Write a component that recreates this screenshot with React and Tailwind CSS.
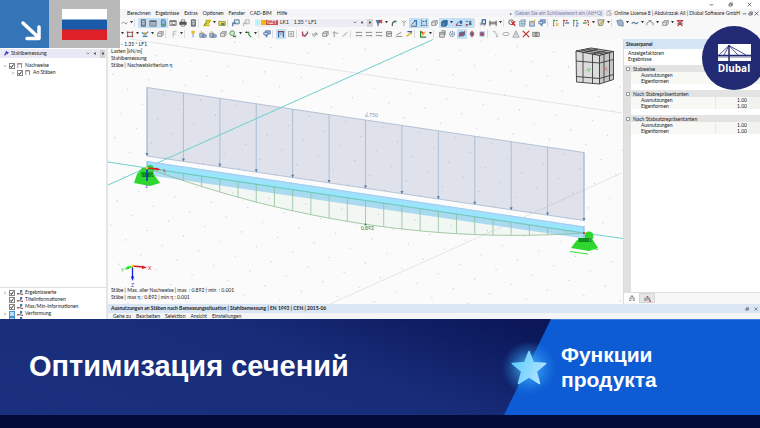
import React, { useState } from 'react';
import clsx from 'clsx';

const menuItems = ['Berechnen', 'Ergebnisse', 'Extras', 'Optionen', 'Fenster', 'CAD-BIM', 'Hilfe'];
const dockItems = ['Gehe zu', 'Bearbeiten', 'Selektion', 'Ansicht', 'Einstellungen'];

// '|' is a separator, 'v' a drop-down arrow, a trailing '*' marks a pressed button
const fileTools = ['undo', 'v', '|', 'cabinet*', 'table*', 'server*', 'report', 'printer', 'cabinet', '|', 'dims', 'v', 'folder', '|', 'copy', 'copyGrey'];
const viewTools = [
  'filter', 'v', 'turn', 'fork', 'graph*', 'ruler*', 'cubeGrey', 'cubeBlue*', 'v*', 'beam*', 'beamRed*', '|',
  'support', 'dimension', 'v', '|', 'zoomRed', 'cubeLight', 'cubeYellow', 'copyBlue', '|',
  'axisX', 'axisY', 'axisZ', 'axisR', 'v', 'plane', 'v', '|', 'shade', 'v', 'wave', 'v', 'arch', 'v', 'cubeGrey', 'v', 'crossRed',
];
const editTools = [
  'v', 'nodes', 'v', 'clip', 'v', 'cubeGrey', '|', 'flagGrey', 'v', '|', 'flag', 'loads', 'loads', 'cubeGrey', 'magnify', 'v', 'arrowGreen', 'v', '|',
  'copyBlue', '|', 'frame*', 'grid', '|', 'zigzag', 'turnGrey', 'cubeGrey', 'up', 'line', '|',
  'rail', 'rail', 'rail', 'railBox', 'railTilt', 'pencil', '|', 'palette', 'v', '|',
  'windowGrey', 'gear', 'orbit*', 'orbitAxis', 'orbitCube', '|', 'steps', 'oval', 'warn', 'cross', 'camera',
];

const shapes = {
  undo: <path d="M2 6q2-4 4-1t3-1" stroke="#888" />,
  cabinet: <><path d="M3 1h5v8H3z" fill="#8b96a3" stroke="#555" /><path d="M4 3h3M4 6h3" stroke="#eee" /></>,
  table: <><path d="M1 2h8v7H1z" fill="#a9b2ba" stroke="#6b747c" /><path d="M1 3h8" stroke="#4b5863" /></>,
  server: <><path d="M3 1h4l1 2v6H3z" fill="#8cb8da" stroke="#3d6c9c" /><path d="M4 6h3v2H4z" fill="#4ba34f" /></>,
  report: <><path d="M1 2h8v6H1z" fill="#f4f4f4" stroke="#666" /><path d="M1 3h8M3 5h2M3 7h5M7 5h1" stroke="#555" /></>,
  printer: <><path d="M3 1h4v3H3z" fill="#fff" stroke="#777" /><path d="M1 4h8v3H1z" fill="#555" stroke="#444" /><path d="M3 7h4v2H3z" fill="#fff" stroke="#777" /></>,
  dims: <><path d="M3 2h6L7 5H4L2 8h6" stroke="#d0b400" strokeWidth="2" /><path d="M1 8l4-5" stroke="#4d7a3c" /></>,
  folder: <><path d="M1 3h8v5H1z" fill="#f0d45a" stroke="#8c8a3a" /><path d="M4 5h4v3H4z" fill="#4f8f54" /></>,
  copy: <><path d="M3 1h6v5H3z" fill="#d8e6f2" stroke="#45688c" /><path d="M1 9V5h4" stroke="#3a6b9c" strokeWidth="1.5" /></>,
  copyGrey: <><path d="M4 1h5v5H4z" fill="#eee" stroke="#aaa" /><path d="M2 9V5h4" stroke="#999" /></>,
  copyBlue: <><path d="M3 1h6v4H5v4L3 7z" fill="#9db8dc" stroke="#4b6ea5" /><path d="M1 3h5v3H1z" fill="#dbe7f5" stroke="#4b6ea5" /></>,
  filter: <><path d="M1 2h5L4 5v4" fill="#5183c0" stroke="#2d5c98" /><path d="M5 1l4 4M9 1L5 5" stroke="#d32626" strokeWidth="1.5" /></>,
  turn: <><path d="M3 9q-1-6 4-6" stroke="#3d5c74" strokeWidth="1.5" /><path d="M6 1l3 2-3 2z" fill="#47a84c" /></>,
  turnGrey: <path d="M2 5h6M5 3L8 5 5 7M2 5q0 3 3 3" stroke="#888" />,
  fork: <path d="M2 2l3 3 3-3M5 5v4M5 2v2" stroke="#999" />,
  graph: <><path d="M1 9h8M2 7l5-5" stroke="#39495b" /><path d="M5 2h3v3M8 2v6" stroke="#3878bb" strokeWidth="1.5" /></>,
  ruler: <path d="M2 1v8M1 8h8M8 1v7M3 3h5" stroke="#35506d" strokeDasharray="2 1" />,
  cubeGrey: <path d="M2 4l2-2h5v4L7 8H2zM2 4h5v4M7 4l2-2" fill="#e3e3e3" stroke="#888" />,
  cubeLight: <path d="M2 3h6v6H2zM2 3l2-2h5v5L8 9M8 3l1-2M5 3v6M2 6h6" fill="#dbe7f2" stroke="#7f9ab8" />,
  cubeBlue: <path d="M2 4l2-2h5v5L7 9H2zM2 4h5v5M7 4l2-2" fill="#4f86b8" stroke="#23527f" />,
  cubeYellow: <><path d="M2 3h6v6H2z" fill="#bed0e6" stroke="#6280a4" /><path d="M5 5l4-4" stroke="#e4a72a" strokeWidth="1.5" /></>,
  beam: <><path d="M1 8h8M2 6l4-3" stroke="#475b70" /><path d="M6 2h3v4H6z" fill="#3668a5" /><circle cx="2" cy="7" r="1" fill="#c63636" /></>,
  beamRed: <><path d="M1 3h8M1 7h8" stroke="#374f6c" strokeDasharray="3 1" /><path d="M5 4h3v3H5z" fill="#456fa2" /><circle cx="2" cy="8" r="1" fill="#c63636" /></>,
  support: <><path d="M4 1h4v5H4z" stroke="#35679e" strokeWidth="1.5" /><path d="M1 5h4M1 8l3-2M6 9l2-3" stroke="#777" /></>,
  dimension: <path d="M1 2v7M9 2v7M1 4h8M1 6h8" stroke="#444" />,
  zoomRed: <><circle cx="4" cy="4" r="3" stroke="#444" /><path d="M6 6l3 3" stroke="#444" /><path d="M4 3l5 5M9 3L5 7" stroke="#d32626" strokeWidth="1.5" /></>,
  axisX: <><path d="M2 1v8M2 2h6" stroke="#3a8f3f" strokeWidth="1.5" strokeDasharray="2 1" /><path d="M5 5l3 4M8 5L5 9" stroke="#e8a21d" /></>,
  axisY: <><path d="M2 1v8M2 2h6" stroke="#c03a32" strokeWidth="1.5" strokeDasharray="2 1" /><path d="M4 5h5" stroke="#3c69b2" strokeWidth="1.5" /></>,
  axisZ: <><path d="M2 1v8M2 2h6" stroke="#3a8f3f" strokeWidth="1.5" strokeDasharray="2 1" /><path d="M5 5h3L5 9h3" stroke="#3c69b2" /></>,
  axisR: <><path d="M3 2h5v7" stroke="#c03a32" strokeWidth="1.5" strokeDasharray="2 1" /><path d="M1 5h5" stroke="#3a8f3f" strokeWidth="1.5" /></>,
  plane: <><path d="M1 1h8L7 8H2z" fill="#ddd" stroke="#777" /><path d="M2 8l6-6" stroke="#c6a52a" strokeWidth="1.5" /></>,
  shade: <path d="M1 2l6-1 2 3v5L3 8z" fill="#9eb4cc" stroke="#7088a3" />,
  wave: <path d="M1 6q2-3 4-1t4-1" stroke="#5d86ae" strokeWidth="1.5" />,
  arch: <path d="M1 8V5l4-2 4 2v3M3 2h4" stroke="#777" />,
  crossRed: <><path d="M2 2l6 7M8 2L2 9M1 2h8" stroke="#c03a42" strokeWidth="1.5" /><path d="M1 6h8" stroke="#555" /></>,
  nodes: <><path d="M2 3h6v5H2z" stroke="#555" /><path d="M1 2h2v2H1zM7 2h2v2H7zM1 7h2v2H1zM7 7h2v2H7z" fill="#cf3a3a" /></>,
  clip: <><path d="M1 3l4 3 4-4M2 8h6" stroke="#3d7fc2" strokeWidth="1.5" /><path d="M3 3h3v3H3z" fill="#e29f24" /></>,
  flagGrey: <path d="M4 9V2h4M4 5h3" stroke="#aaa" />,
  flag: <><path d="M5 9V4" stroke="#467fbd" /><path d="M3 1h4v4L3 4z" fill="#f0b429" /></>,
  loads: <><path d="M1 4h5v5H1zM4 6h5v3H4z" fill="#b7c8da" stroke="#5a7899" /><path d="M2 1l4 4" stroke="#e29f24" /></>,
  magnify: <><circle cx="4" cy="4" r="3" fill="#cfe8cf" stroke="#478a4c" /><path d="M5 7h4v2H5z" fill="#597b5b" /></>,
  arrowGreen: <><path d="M2 3h4v3l3 3" stroke="#3b9340" strokeWidth="1.5" /><circle cx="3" cy="3" r="1" fill="#222" /></>,
  frame: <><path d="M2 9V2h6v7" stroke="#35679e" strokeWidth="1.5" /><path d="M1 2h8M4 5h2" stroke="#a33" /></>,
  grid: <path d="M1 2h8M1 8h8M2 2v6M8 2v6M4 4h2v2H4z" stroke="#999" />,
  zigzag: <><path d="M2 2v5l3 1 3-4V2" stroke="#d43d3d" strokeWidth="1.5" /><path d="M1 3l3 4 5-3" stroke="#3b69b5" /></>,
  up: <path d="M4 9V2M2 4l2-2 2 2M6 4h3" stroke="#888" />,
  line: <path d="M2 8l6-5" stroke="#888" />,
  rail: <path d="M1 3h8M1 7h8M2 3v1M8 7v1" stroke="#777" />,
  railBox: <path d="M2 2h6v6H2zM1 4h7M2 7l6-3" stroke="#777" />,
  railTilt: <path d="M2 6l6-3M1 8h8" stroke="#777" />,
  pencil: <><path d="M3 2h5L7 5" stroke="#385c9f" strokeWidth="1.5" /><path d="M2 8l5-4" stroke="#e4b722" strokeWidth="2" /></>,
  palette: <><path d="M2 1v8h7" stroke="#2f8b39" strokeWidth="1.5" /><path d="M3 2l3 3" stroke="#d93030" strokeWidth="2" /><path d="M4 7l4-5" stroke="#e4b722" strokeWidth="1.5" /></>,
  windowGrey: <path d="M2 3h6v6H2zM4 1h5v5M2 5h6" fill="#ddd" stroke="#777" />,
  gear: <><circle cx="5" cy="5" r="3" stroke="#5a78a5" strokeDasharray="1.5 1" strokeWidth="1.5" /><circle cx="5" cy="5" r="1" fill="#354a8c" /></>,
  orbit: <><ellipse cx="5" cy="5" rx="4" ry="3" fill="#4a7cb4" /><path d="M1 8l8-6" stroke="#c93434" strokeWidth="1.5" /></>,
  orbitAxis: <><circle cx="5" cy="5" r="3" fill="#6c8ec0" /><path d="M5 1v8M3 5h4" stroke="#c93434" strokeWidth="1.5" /></>,
  orbitCube: <><path d="M2 2h6v6H2z" fill="#6c8ec0" /><circle cx="5" cy="5" r="2" fill="#c93434" /></>,
  steps: <path d="M1 2h3v3M6 4v4M5 7l1 2 2-2" stroke="#aaa" />,
  oval: <ellipse cx="5" cy="5" rx="4" ry="2" stroke="#999" />,
  warn: <path d="M5 1l4 8H1zM5 4v3" fill="#e5e5e5" stroke="#999" />,
  cross: <path d="M1 1l8 8M9 1L1 9" stroke="#c43232" strokeWidth="1.5" />,
  camera: <><path d="M1 3h8v5H1z" fill="#ddd" stroke="#666" /><circle cx="5" cy="5.5" r="1.5" stroke="#555" /></>,
};

function ToolStrip({ items, className }) {
  return (
    <div className={clsx('flex h-full shrink-0 items-center', className)}>
      {items.map((item, i) => {
        const pressed = item.endsWith('*');
        const name = item.replace('*', '');
        if (name === '|') {
          return <span key={i} className="mx-auto h-2 w-1 border-l border-[#dcdcdc]" />;
        }
        return (
          <button
            key={i}
            type="button"
            aria-label={name === 'v' ? 'more' : name}
            className={clsx(
              'flex h-[10px] shrink-0 items-center justify-center',
              name === 'v' ? 'w-[5px]' : 'w-[10px]',
              pressed && 'bg-[#c3e0f7]'
            )}
          >
            {name === 'v' ? (
              <svg viewBox="0 0 4 3" className="w-[3px]"><path d="M0 0h4L2 3z" fill="#333" /></svg>
            ) : (
              <svg viewBox="0 0 10 10" fill="none" className="size-2">{shapes[name]}</svg>
            )}
          </button>
        );
      })}
    </div>
  );
}

function WindowIcon({ kind, className }) {
  return (
    <svg viewBox="0 0 8 8" fill="none" stroke="#333" className={className}>
      {kind === 'min' && <path d="M1 4.5h6" />}
      {kind === 'restore' && <path d="M1.5 3.5h4v3h-4zM3 3V1.5h4v4H6" />}
      {kind === 'close' && <path d="M1 1l6 6M7 1L1 7" />}
    </svg>
  );
}

function TitleBar() {
  return (
    <div className="flex h-[9px] items-center justify-end gap-[14px] bg-white pr-2">
      {['min', 'restore', 'close'].map((kind) => (
        <button key={kind} type="button" aria-label={kind}>
          <WindowIcon kind={kind} className="size-[5px]" />
        </button>
      ))}
    </div>
  );
}

function MenuBar() {
  return (
    <div className="flex h-2 items-center bg-[#f5f5f7] pr-px pl-[127px]">
      <nav className="flex gap-[5px]">
        {menuItems.map((item) => (
          <button key={item} type="button">{item}</button>
        ))}
      </nav>
      <span className="ml-auto text-[4px] text-[#555]">▸</span>
      <input
        aria-label="Suche"
        placeholder="Geben Sie ein Schlüsselwort ein (Alt+Q)"
        className="ml-[2px] h-[7px] w-[90px] bg-[#e7e7f3] px-px placeholder:text-[#7b7b9b]"
      />
      <svg viewBox="0 0 8 8" fill="none" stroke="#aaa" className="mx-[2px] size-[6px]">
        <path d="M1 2h4v5H1zM5 4h2v3H5M3 2V1h4" />
      </svg>
      <span className="shrink-0">Online License 8 | Abdulrzzak Ali | Dlubal Software GmbH</span>
      <div className="ml-[2px] flex shrink-0 gap-px">
        {['min', 'restore', 'close'].map((kind) => (
          <WindowIcon key={kind} kind={kind} className="size-[5px]" />
        ))}
      </div>
    </div>
  );
}

function LoadCasePicker() {
  return (
    <div className="mr-px ml-1 flex h-2 w-[118px] items-center bg-[#ececf6]">
      <span className="h-[5px] w-[5px] bg-[#b6f3fa]" />
      <span className="ml-px h-[5px] w-[5px] bg-[#f7b50c]" />
      <span className="h-[5px] w-3 bg-[#cb5151] text-center leading-[5px] text-white">GZT</span>
      <span className="ml-[2px]">LK1</span>
      <span className="ml-[5px]">1.35 * LF1</span>
      <svg viewBox="0 0 6 4" fill="none" stroke="#555" className="ml-auto w-1"><path d="M1 1l2 2 2-2" /></svg>
      <button type="button" aria-label="vorheriger" className="ml-1 w-1">
        <svg viewBox="0 0 4 6" className="h-[3px]"><path d="M3 0v6L0 3z" /></svg>
      </button>
      <button type="button" aria-label="nächster" className="ml-[2px] flex h-2 w-[6px] items-center justify-center bg-[#d5d5d5]">
        <svg viewBox="0 0 4 6" className="h-[3px]"><path d="M1 0v6l3-3z" /></svg>
      </button>
    </div>
  );
}

function CheckRow({ label, checked, expandable, open, indent, icon }) {
  const [on, setOn] = useState(checked);
  return (
    <label className={clsx('flex shrink-0 items-center', indent ? 'pl-[10px]' : 'pl-[2px]')}>
      <svg viewBox="0 0 6 6" fill="none" stroke="#777" className="mr-[2px] ml-px size-1">
        {expandable && <path d={open ? 'M1 2l2 2 2-2' : 'M2 1l2 2-2 2'} />}
      </svg>
      <span className="relative flex">
        <input
          type="checkbox"
          aria-label={label || 'Ebene'}
          checked={on}
          onChange={() => setOn(!on)}
          className="size-[6px] appearance-none border border-[#858585] bg-white not-checked:border-[#4a90cc] not-checked:bg-[#b9dcf6]"
        />
        {on && (
          <svg viewBox="0 0 6 6" fill="none" stroke="#333" className="pointer-events-none absolute inset-0 size-[6px]">
            <path d="M1.5 3l1 1.5 2-3" />
          </svg>
        )}
      </span>
      <svg viewBox="0 0 8 7" fill="none" className="mx-[2px] w-[6px]">
        {icon === 'frame' ? (
          <><path d="M1 7V1h5v6" stroke="#a56060" /><path d="M0 1h7" stroke="#777" /></>
        ) : (
          <><path d="M1 5h3l3 1M4 5l2-3" stroke="#456" /><path d="M4 0h3v3H4z" fill="#4a6fa8" /><path d="M0 4h2v2H0zM6 5h2v2H6z" fill="#b84242" /></>
        )}
      </svg>
      {label}
    </label>
  );
}

function Navigator() {
  return (
    <aside className="flex w-27 shrink-0 flex-col border-r-2 border-[#e4e4ea] bg-white pt-[10px]">
      <div className="flex h-[9px] shrink-0 items-center bg-[#e8e9f5] pr-px pl-1">
        <svg viewBox="0 0 8 8" fill="none" className="mr-[2px] size-[5px]">
          <path d="M1 7l3-6 1 3 2-2" stroke="#4545c8" strokeWidth="2" />
        </svg>
        <h2>Stahlbemessung</h2>
        <svg viewBox="0 0 6 4" fill="none" stroke="#555" className="ml-auto w-1"><path d="M1 1l2 2 2-2" /></svg>
        <svg viewBox="0 0 4 6" className="mx-[4px] h-[3px]"><path d="M3 0v6L0 3z" /></svg>
        <span className="flex h-2 w-[5px] items-center justify-center bg-[#d2d2d6]">
          <svg viewBox="0 0 4 6" className="h-[3px]"><path d="M1 0v6l3-3z" /></svg>
        </span>
      </div>
      <div className="flex flex-1 flex-col pt-1">
        <CheckRow label="Nachweise" icon="frame" checked expandable open />
        <CheckRow label="An Stäben" icon="frame" checked expandable indent />
      </div>
      <div className="h-8 overflow-hidden border-t border-[#dedee4] pt-px">
        <CheckRow label="Ergebniswerte" checked expandable />
        <CheckRow label="Titelinformationen" checked />
        <CheckRow label="Max/Min-Informationen" checked />
        <CheckRow label="Verformung" expandable />
        <CheckRow expandable />
      </div>
    </aside>
  );
}

const beamX = (t) => 147 + 437 * t;
const axisY = (t) => 168 + 65 * t;
const sag = (t) => axisY(t) + 95 * t * (1 - t);
const steps = (n) => Array.from({ length: n + 1 }, (_, i) => i / n);

// background snap grid, drawn as a skewed lattice
const gridDots = [];
for (let j = -8; j < 24; j++) {
  for (let i = -14; i < 20; i++) {
    const x = 127.7 + 36.4 * i + 15 * j;
    const y = 89.3 + 5.4 * i + 14.8 * j;
    if (x > 108 && x < 623 && y > 40 && y < 304) gridDots.push([x, y]);
  }
}

function NavCube() {
  return (
    <g stroke="#3c3c3c" strokeWidth="0.9">
      <path d="M576 51l15-3 22.5 3.500-14 4z" fill="#bcbcbc" />
      <path d="M576 51l23.500 4.500V84L576.500 82z" fill="#dcdcdc" />
      <path d="M599.500 55.500l14-4V79.500l-14 4.500z" fill="#c6c6c6" />
      <path
        d="M583 52.500V82.500M592.500 54V83.500M576 61l23.500 2 14-3.500M576.500 76.500l23 2 14-4M604 54v28.500M609.500 53v28M581 50l22.500 4M586 49l22.500 4M583 52.500l15-3.500M592.500 54l14-3.500"
        fill="none"
      />
      <g stroke="none" fontSize="6" fontWeight="700">
        <text x="585" y="72" fill="#5fc46a">-Y</text>
        <text x="604" y="71" fill="#d98585">X</text>
      </g>
    </g>
  );
}

function ModelCanvas() {
  return (
    <svg viewBox="108 39 515 265" preserveAspectRatio="xMinYMin meet" className="absolute inset-0 size-full" fontSize="5">
      <g fill="#c6c6c6">
        {gridDots.map(([x, y], i) => <circle key={i} cx={x} cy={y} r="0.6" />)}
      </g>
      <path d="M130 39L622 113M622 173L330 304" stroke="#dedede" strokeWidth="0.8" />
      <path d="M147 87.500L584 152.500V220.500L147 156z" fill="#949fbd" fillOpacity="0.27" stroke="#a5b8d0" strokeWidth="0.8" />
      {steps(12).map((t) => (
        <g key={t}>
          <path d={`M${beamX(t)} ${87.5 + 65 * t}v68`} stroke="#a6bbd4" strokeWidth="0.9" />
          <path d={`M${beamX(t) - 1.5} ${153 + 65 * t}h3l-1.500 3z`} fill="#5878a6" />
        </g>
      ))}
      <path d="M108 185L433 39.500" stroke="#6fcfcf" />
      <path d="M108 162L147 168M584 233L623 238.500" stroke="#6fcfcf" />

      <path d="M147 161L584 226.500V238.500L147 175z" fill="#addcf8" />
      <path d="M147 163.500L584 228.500V233L147 170.500z" fill="#98e6fe" />
      <path d="M147 161.500L584 227" stroke="#9ccff5" />
      <path d="M147 161v14M584 226v12" stroke="#7fb5e6" />
      <path
        d={`M147 168${steps(24).map((t) => `L${beamX(t)} ${sag(t)}`).join('')}z`}
        fill="#8fc08f"
        fillOpacity="0.07"
        stroke="#83b583"
        strokeWidth="0.7"
      />
      <path d="M147 168L584 233" stroke="#6cc8cf" strokeWidth="0.6" />
      {steps(24).map((t) => (
        <path key={t} d={`M${beamX(t)} ${axisY(t)}V${sag(t)}`} stroke="#8fc09a" strokeWidth="0.8" />
      ))}
      <text x="365" y="117" fill="#6f93bd">6.750</text>
      <circle cx="365.5" cy="224.500" r="0.9" fill="#1e7a2a" />
      <text x="361" y="230" fill="#1e7a2a">0.892</text>

      <g fill="#2fd62f">
        <path d="M134 183l3-9 5-6h8l5 8 5 7-10 3z" />
        <circle cx="150" cy="169.500" r="4.500" fill="#35cf4d" />
        <path d="M571 248l6-8 14-3 7 11-9 3z" />
        <circle cx="589" cy="236" r="4.500" />
        <path d="M570 251.500l18 2.500M590 248l8 1.500" stroke="#2fe62f" />
      </g>
      <path d="M141 172h12l-2 5h-8zM578 238h11v4h-10z" fill="#12a525" />
      <text x="141" y="177" fill="#0b5d16">0.001</text>
      <text x="579" y="242" fill="#0b5d16">0.001</text>
      <path d="M147 168v13" stroke="#1522d6" strokeWidth="1.4" />
      <path d="M147 168l10 1" stroke="#d61c1c" strokeWidth="1.4" />
      <path d="M156 167.500l5 2-5 1z" fill="#d61c1c" />
      <circle cx="147" cy="168" r="1.2" fill="#f1e316" />
      <circle cx="584" cy="233" r="1" fill="#e02020" />
      <text x="163" y="172" fill="#e02020">x</text>
      <text x="145.500" y="187.500" fill="#3a3ae6">z</text>

      <path d="M132.500 266v11" stroke="#1522d6" strokeWidth="1.3" />
      <path d="M130.800 276.500h3.400l-1.700 4.500z" fill="#1522d6" />
      <path d="M132.500 266l10 1" stroke="#d61c1c" strokeWidth="1.300" />
      <path d="M142 265.500l5 2-5 1.400z" fill="#d61c1c" />
      <path d="M132.500 266l-6 2.500" stroke="#1ee01e" strokeWidth="1.600" />
      <path d="M128.500 265.500l-4 4 4.500-0.500z" fill="#1ee01e" />
      <circle cx="132.500" cy="266" r="1.400" fill="#f1e316" />
      <text x="148" y="270" fill="#e02020">X</text>
      <text x="121" y="271.500" fill="#1ec41e">Y</text>
      <text x="131" y="287" fill="#3a3ae6">Z</text>
      <NavCube />
    </svg>
  );
}

function Viewport() {
  return (
    <section className="relative flex min-w-0 flex-1 flex-col justify-between overflow-hidden bg-[#fbfbfb] pt-[2px] pb-[3px] pl-[3px] leading-[7px]">
      <ModelCanvas />
      <div className="relative">
        <p>LK1 - 1.35 * LF1</p>
        <p>Lasten [kN/m]</p>
        <p>Stahlbemessung</p>
        <p>Stäbe | Nachweiskriterium η</p>
      </div>
      <div className="relative">
        <p>Stäbe | Max. aller Nachweise | max&nbsp; : 0.892 | min&nbsp; : 0.001</p>
        <p>Stäbe | max η : 0.892 | min η : 0.001</p>
      </div>
    </section>
  );
}

const factorGroups = [
  { title: 'Stabweise', value: '' },
  { title: 'Nach Stabrepräsentanten', value: '1.00' },
  { title: 'Nach Stabsatzrepräsentanten', value: '1.00' },
];

function ControlPanel() {
  return (
    <aside className="flex w-[137px] shrink-0 flex-col border-l border-[#dcdcdc] bg-[#f6f6f6]">
      <h2 className="h-[10px] shrink-0 bg-[#d6e5f3] pl-[2px] leading-[10px] font-bold">Steuerpanel</h2>
      <div className="flex flex-1 flex-col bg-white">
        <div className="h-4 shrink-0 pt-px pl-1 leading-[6px]">
          <p>Anzeigefaktoren</p>
          <p>Ergebnisse</p>
        </div>
        <div className="flex-1 border-l-[7px] border-[#e0e0e0]">
          <table className="w-full border-collapse leading-[6px]">
            {factorGroups.map(({ title, value }) => (
              <tbody key={title}>
                <tr className="h-[7px] bg-[#e3e3e3]">
                  <th colSpan={3} className="p-0 text-left font-normal">
                    <span className="-ml-[5px] flex items-center gap-[3px]">
                      <svg viewBox="0 0 4 4" fill="#fff" stroke="#999" className="size-1 shrink-0"><path d="M.5.5h3v3h-3z" /></svg>
                      {title}
                    </span>
                  </th>
                </tr>
                {['Ausnutzungen', 'Eigenformen'].map((name) => (
                  <tr key={name} className="h-[6px] bg-[#f8f9f4]">
                    <td className="border-r border-[#e8e8e8] p-0 pl-[10px]">{name}</td>
                    <td className="w-[34px] p-0 pr-[2px] text-right">{value}</td>
                    <td className="w-[11px] bg-[#f1f1ee] p-0" />
                  </tr>
                ))}
                <tr className="h-[6px]"><td colSpan={3} className="p-0" /></tr>
              </tbody>
            ))}
          </table>
        </div>
      </div>
      <div className="flex h-3 shrink-0 items-start border-t border-[#dedede]">
        <button type="button" aria-label="Faktoren" className="flex h-[10px] w-[15px] items-center justify-center bg-white">
          <svg viewBox="0 0 8 8" fill="none" stroke="#555" className="size-[6px]"><path d="M1 6q0-4 3-4t3 4M0 7h3M5 7h3M4 2V0M3 5h2" /></svg>
        </button>
        <button type="button" aria-label="Filter" className="flex h-[10px] w-4 items-center justify-center border border-[#d6d6d6] bg-[#e6e6e6]">
          <svg viewBox="0 0 8 8" className="size-[7px]"><path d="M0 3h4v4H0z" fill="#aaa" /><path d="M3 1h2v2H3zM6 6h2v2H6z" fill="#d34a4a" /><path d="M4 3h3v3H4z" fill="#7ba0cc" /></svg>
        </button>
      </div>
    </aside>
  );
}

function ResultDock() {
  return (
    <div className="shrink-0">
      <div className="flex h-[9px] items-center bg-[#dae6f3] pr-[2px] pl-[3px]">
        <h2 className="flex-1 font-bold">
          Ausnutzungen an Stäben nach Bemessungssituation | Stahlbemessung | EN 1993 | CEN | 2015-06
        </h2>
        <WindowIcon kind="restore" className="mr-[5px] size-1" />
        <WindowIcon kind="close" className="size-1" />
      </div>
      <nav className="flex h-[6px] items-center gap-[5px] overflow-hidden bg-[#f5f5f5] pt-px pl-[5px]">
        {dockItems.map((item) => (
          <button key={item} type="button">{item}</button>
        ))}
      </nav>
    </div>
  );
}

function LanguageBadge() {
  return (
    <div className="absolute top-0 left-0 flex h-12 w-[120px]">
      <div className="flex w-[49px] items-center justify-center bg-[#3375b6]">
        <svg viewBox="0 0 49 48" fill="none" stroke="#fff" strokeWidth="3.500" strokeLinecap="round" strokeLinejoin="round">
          <path d="M23 23L38 37M39 27V38.500H27" />
        </svg>
      </div>
      <div className="flex flex-1 items-center justify-center bg-[#b9b9b9]">
        <svg viewBox="0 0 45 31" className="w-[45px]">
          <path d="M0 0h45v11H0z" fill="#fff" />
          <path d="M0 10.500h45v10.500H0z" fill="#195ba8" />
          <path d="M0 20.500h45V31H0z" fill="#df2027" />
        </svg>
      </div>
    </div>
  );
}

function DlubalBadge() {
  return (
    <div className="absolute top-[26px] -right-[6px] flex size-16 flex-col items-center rounded-full bg-[#212a72] pt-[18px]">
      <svg viewBox="0 0 33 17" className="w-[33px]">
        <path d="M0 0h33v17H0z" fill="#fff" />
        <path d="M11 1v16M0 11.500h33" stroke="#212a72" strokeWidth="1.500" fill="none" />
        <path d="M11 1.500L1 11M11 1.500L28 11M11 1.500L20 11M11 1.500L6 11" stroke="#212a72" strokeWidth="0.800" fill="none" />
        <path d="M0 13h33" stroke="#212a72" strokeWidth="0.600" />
      </svg>
      <span className="font-['Open_Sans',sans-serif] text-[10px] leading-[15px] font-bold text-white">Dlubal</span>
    </div>
  );
}

function Banner() {
  return (
    <footer className="shrink-0 border-b-[13px] border-[#030c38] bg-[linear-gradient(20deg,#1a307e_0%,#182d7a_45%,#0b1759_75%,#091452_100%)] font-['Liberation_Sans',sans-serif] font-bold text-white">
      <div className="flex h-24 items-stretch">
        <h1 className="flex flex-1 items-center pl-[29px] text-[29px]">Оптимизация сечений</h1>
        <div className="relative flex w-[256px] items-center">
          <div className="absolute inset-0 border-t border-[#3f7bdc] bg-[#0d5cd3] [clip-path:polygon(47px_0,100%_0,100%_100%,0_100%)]" />
          <svg viewBox="0 0 50 50" className="relative w-[50px] overflow-visible">
            <defs>
              <radialGradient id="glow">
                <stop offset="0" stopColor="#4fc8ff" stopOpacity="0.9" />
                <stop offset="0.5" stopColor="#3aa8f5" stopOpacity="0.5" />
                <stop offset="1" stopColor="#2a8cf0" stopOpacity="0" />
              </radialGradient>
              <linearGradient id="star" x1="0" x2="1" y1="0.3" y2="0.7">
                <stop offset="0" stopColor="#5ccbff" />
                <stop offset="1" stopColor="#b5e6ff" />
              </linearGradient>
            </defs>
            <circle cx="25" cy="26" r="27" fill="url(#glow)" />
            <path
              d="M25 9.500L29.300 20.500L41.800 21.500L32.200 29.300L35.500 41.500L25 34.800L14.500 41.500L17.800 29.300L8.200 21.500L20.700 20.500z"
              fill="url(#star)"
              stroke="url(#star)"
              strokeWidth="1.500"
              strokeLinejoin="round"
            />
          </svg>
          <p className="relative ml-[7px] text-[21px] leading-[25px]">Функции<br />продукта</p>
        </div>
      </div>
    </footer>
  );
}

function App() {
  return (
    <div className="relative flex h-screen flex-col overflow-hidden bg-white">
      <div className="flex min-h-0 flex-1 flex-col overflow-hidden font-[Lato,'Open_Sans',sans-serif] text-[5px] leading-[7px] whitespace-nowrap text-[#222]">
        <TitleBar />
        <MenuBar />
        <div className="flex h-[11px] shrink-0 items-center bg-[#f8f8f8] pl-[119px]">
          <ToolStrip items={fileTools} />
          <LoadCasePicker />
          <ToolStrip items={viewTools} />
        </div>
        <div className="flex h-[11px] shrink-0 items-center bg-[#f8f8f8] pl-[120px]">
          <ToolStrip items={editTools} />
        </div>
        <div className="flex min-h-0 flex-1">
          <Navigator />
          <main className="flex min-w-0 flex-1 flex-col">
            <div className="flex min-h-0 flex-1">
              <Viewport />
              <ControlPanel />
            </div>
            <ResultDock />
          </main>
        </div>
      </div>
      <LanguageBadge />
      <DlubalBadge />
      <Banner />
    </div>
  );
}

export default App;
